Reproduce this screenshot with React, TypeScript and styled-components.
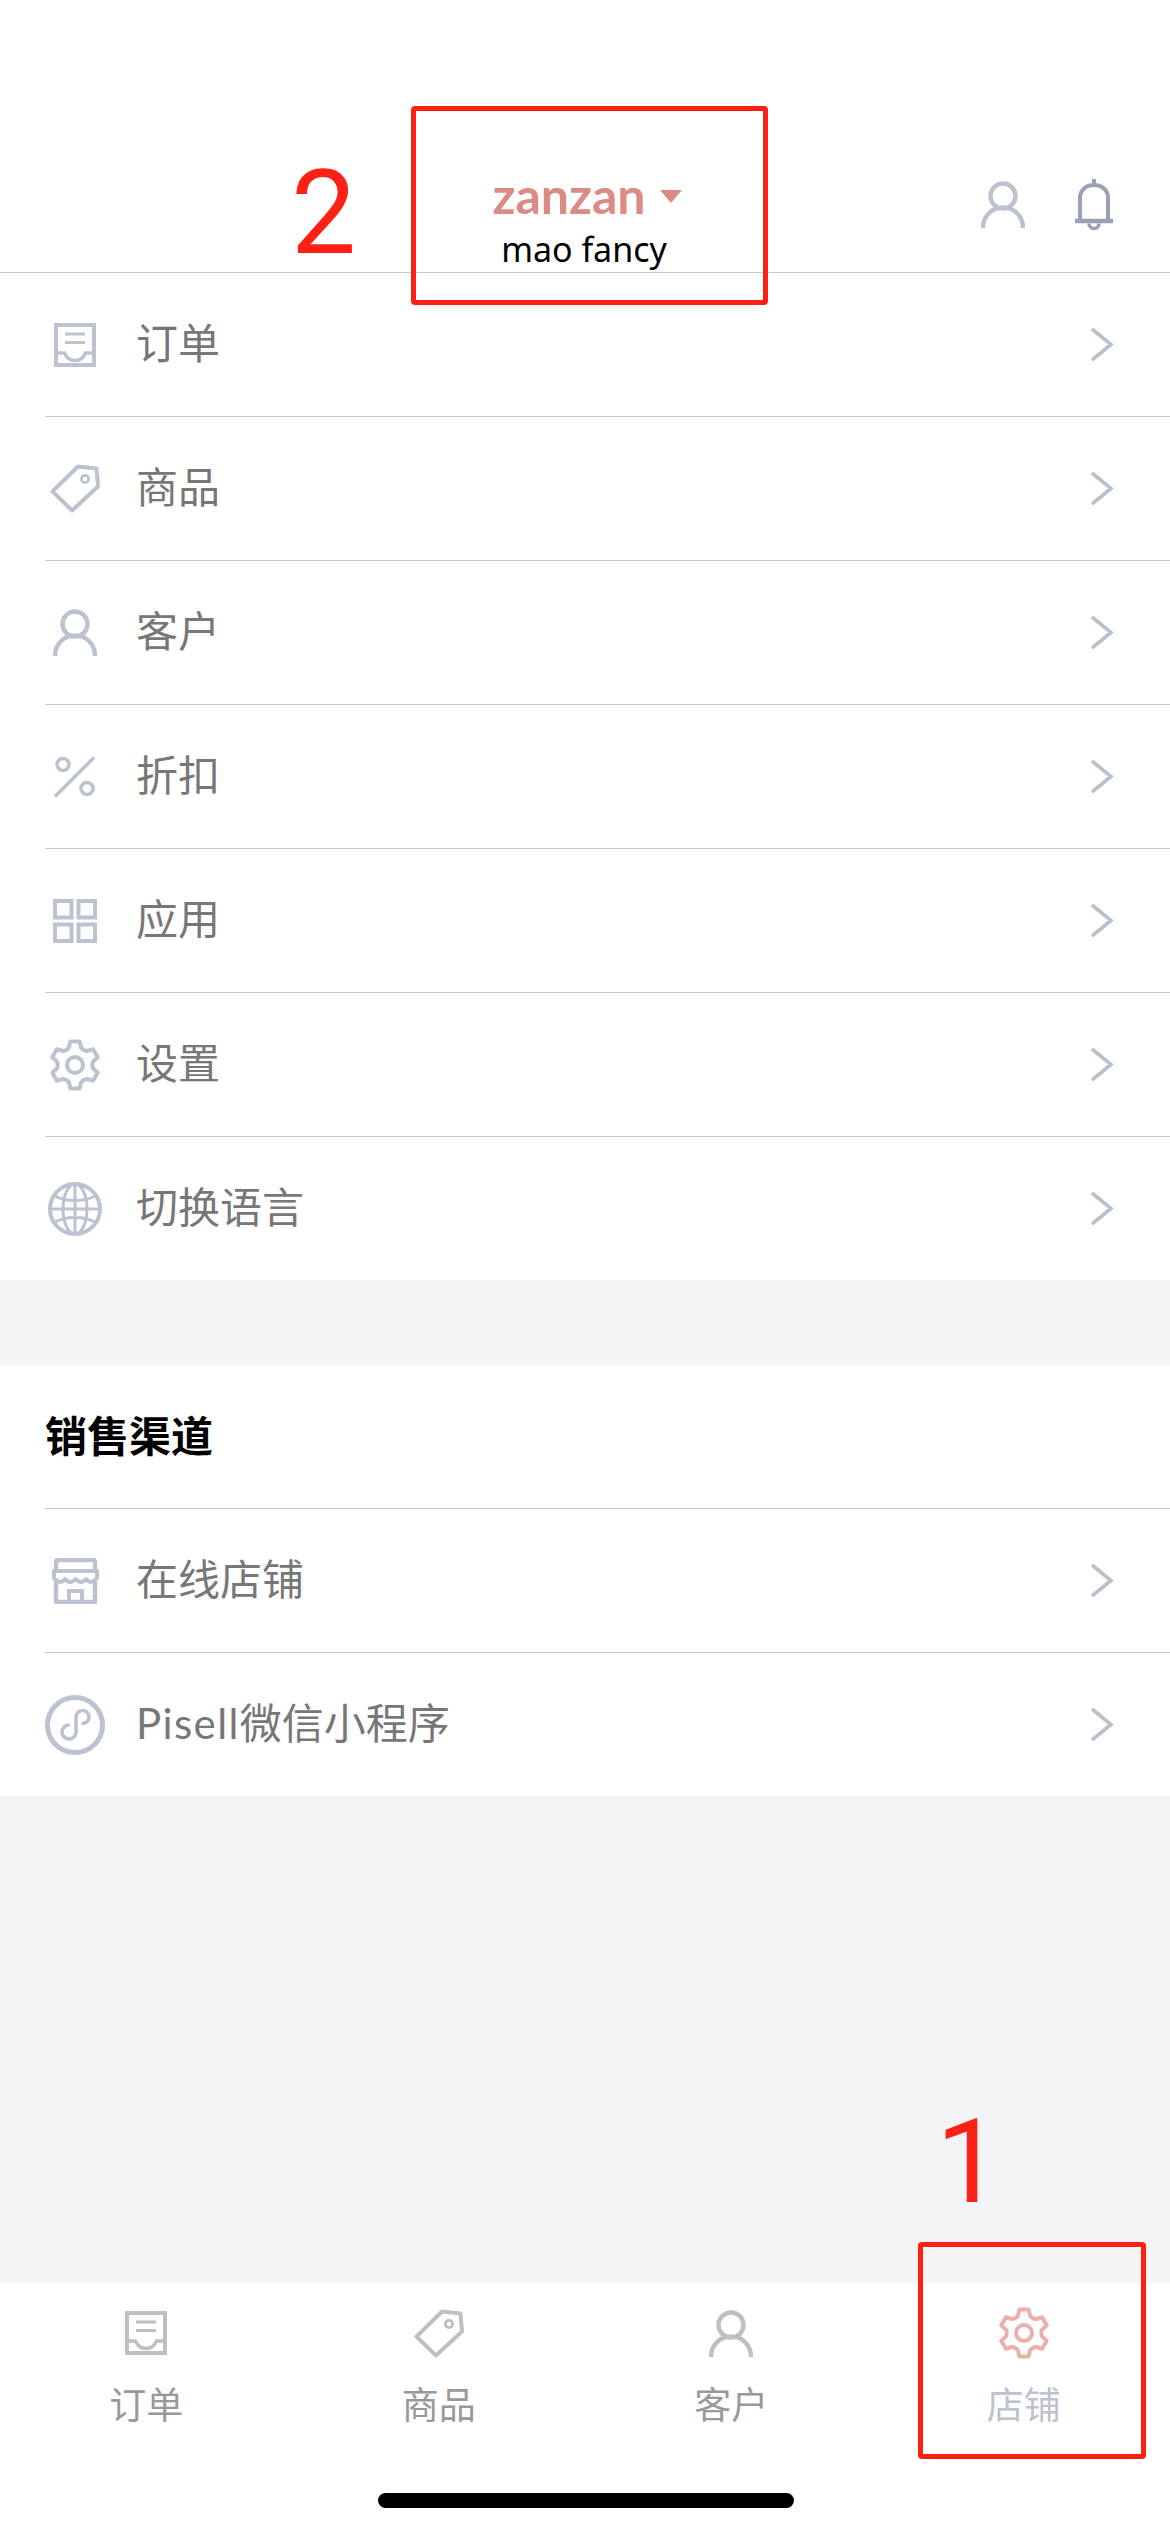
import { ReactNode } from 'react';
import styled, { createGlobalStyle } from 'styled-components';

const GlobalStyle = createGlobalStyle`
  html, body {
    margin: 0;
    padding: 0;
    background: #f3f4f6;
  }

  * {
    box-sizing: border-box;
  }
`;

const Page = styled.div`
  position: relative;
  display: flex;
  flex-direction: column;
  width: 1170px;
  height: 2532px;
  overflow: hidden;
  font-family: 'Lato', 'Noto Sans CJK SC', sans-serif;
  background: #f3f4f6;
`;

const Header = styled.header`
  display: grid;
  grid-template-columns: 1fr auto 1fr;
  align-items: start;
  height: 273px;
  padding: 170px 57px 0;
  background: #fff;
  border-bottom: 1px solid #c6c6c6;
`;

const StoreSwitch = styled.div`
  display: flex;
  grid-column: 2;
  flex-direction: column;
  align-items: center;
`;

const StoreName = styled.div`
  display: flex;
  gap: 14px;
  align-items: center;
  height: 50px;
  margin-left: 4px;
  color: #db8a84;
  font-weight: 700;
  font-size: 50px;
  line-height: 50px;
`;

const Caret = styled.span`
  width: 0;
  height: 0;
  margin-top: 2px;
  border-top: 13px solid #db8a84;
  border-right: 11px solid transparent;
  border-left: 11px solid transparent;
`;

const OwnerName = styled.div`
  margin-top: 7px;
  margin-right: 2px;
  color: #000;
  font-size: 34px;
  font-family: 'Noto Sans', sans-serif;
  line-height: 44px;
`;

const HeaderActions = styled.div`
  display: flex;
  grid-column: 3;
  gap: 50px;
  align-items: center;
  justify-content: flex-end;
  height: 62px;
  padding-top: 6px;
`;

const HeaderIcon = styled.span<{ $dark?: boolean }>`
  display: block;
  color: ${({ $dark }) => ($dark ? '#9aa1b5' : '#bcc2cf')};
`;

const MenuGroup = styled.section`
  background: #fff;
`;

const Gap = styled.div`
  height: 85px;
`;

const Filler = styled.div`
  flex: 1;
`;

const GroupTitle = styled.h2`
  display: flex;
  align-items: center;
  height: 144px;
  margin: 0 0 0 45px;
  padding-bottom: 6px;
  color: #000;
  font-weight: 700;
  font-size: 42px;
  border-bottom: 1px solid #c6c6c6;
`;

const Row = styled.div`
  display: flex;
  gap: 31px;
  align-items: center;
  height: 144px;
  margin-left: 45px;
  padding-right: 56px;
  color: #777;
  font-size: 42px;
  border-bottom: 1px solid #c6c6c6;

  &:last-child {
    height: 143px;
    border-bottom: none;
  }
`;

const RowIcon = styled.span`
  display: flex;
  flex: none;
  align-items: center;
  justify-content: center;
  width: 60px;
  height: 60px;
  color: #bcc2cf;
`;

const RowLabel = styled.span`
  flex: 1;
  margin-top: -8px;
`;

const BrandName = styled.span`
  letter-spacing: 1.4px;
`;

const TabBar = styled.nav`
  display: grid;
  grid-template-columns: repeat(4, 1fr);
  height: 249px;
  background: #fff;
`;

const Tab = styled.div<{ $active?: boolean }>`
  display: flex;
  flex-direction: column;
  align-items: center;
  padding-top: 20px;
  color: ${({ $active }) => ($active ? '#bcc2cf' : '#999')};
  font-size: 37px;
`;

const TabIcon = styled.span<{ $active?: boolean }>`
  display: flex;
  align-items: center;
  justify-content: center;
  height: 60px;
  color: ${({ $active }) => ($active ? '#e8b2ac' : '#bfbfbf')};
`;

const TabLabel = styled.span`
  margin-top: 19px;
  line-height: 46px;
`;

const HomeBar = styled.div`
  position: absolute;
  bottom: 24px;
  left: 378px;
  width: 416px;
  height: 15px;
  background: #000;
  border-radius: 8px;
`;

// red markup drawn over the screenshot
const Callout = styled.div<{ $left: number; $top: number; $width: number; $height: number }>`
  position: absolute;
  top: ${({ $top }) => $top}px;
  left: ${({ $left }) => $left}px;
  width: ${({ $width }) => $width}px;
  height: ${({ $height }) => $height}px;
  border: 5px solid #ff2015;
  border-radius: 4px;
`;

const CalloutNumber = styled.div<{ $left: number; $top: number }>`
  position: absolute;
  top: ${({ $top }) => $top}px;
  left: ${({ $left }) => $left}px;
  color: #ff2015;
  font-size: 116px;
  font-family: 'Roboto', sans-serif;
  line-height: 116px;
`;

const Svg = ({ w, h, children }: { w: number; h: number; children: ReactNode }) => (
  <svg
    width={w}
    height={h}
    viewBox={`0 0 ${w} ${h}`}
    fill="none"
    stroke="currentColor"
    strokeWidth={4}
    style={{ display: 'block' }}
  >
    {children}
  </svg>
);

const OrderIcon = () => (
  <Svg w={42} h={44}>
    <rect x="2" y="2" width="38" height="40" />
    <path d="M11 11H31M11 19.5H31" strokeWidth={3} />
    <path d="M2 30H10.5C12.5 35 16.5 37.5 21 37.5C25.5 37.5 29.5 35 31.5 30H40" strokeWidth={3.4} />
  </Svg>
);

const TagIcon = () => (
  <Svg w={50} h={49}>
    <path d="M28 2.5L46.5 4.5L48 22.5L22 46.5L2.5 27.5Z" strokeLinejoin="round" />
    <circle cx="35" cy="15" r="3.6" strokeWidth={2.8} />
  </Svg>
);

const PersonIcon = () => (
  <Svg w={44} h={47}>
    <circle cx="22" cy="15" r="12.5" strokeWidth={4.4} />
    <path d="M2 47C2 35 11 26.5 22 26.5C33 26.5 42 35 42 47" strokeWidth={4.4} />
  </Svg>
);

const PercentIcon = () => (
  <Svg w={42} h={41}>
    <circle cx="9" cy="8.5" r="6" strokeWidth={3.6} />
    <circle cx="33" cy="32.5" r="6" strokeWidth={3.6} />
    <path d="M39 2.5L2 39.5" strokeWidth={3.6} strokeLinecap="round" />
  </Svg>
);

const GridIcon = () => (
  <Svg w={44} h={44}>
    <rect x="2" y="2" width="16.5" height="16.5" />
    <rect x="25.5" y="2" width="16.5" height="16.5" />
    <rect x="2" y="25.5" width="16.5" height="16.5" />
    <rect x="25.5" y="25.5" width="16.5" height="16.5" />
  </Svg>
);

const polar = (r: number, deg: number) => {
  const a = ((deg - 90) * Math.PI) / 180;
  return `${(26 + r * Math.cos(a)).toFixed(2)} ${(26 + r * Math.sin(a)).toFixed(2)}`;
};

// six tooth gear, valleys pulled in with a curve
const gearPath = () => {
  let d = '';
  for (let i = 0; i < 6; i += 1) {
    const c = i * 60;
    d += `${i === 0 ? 'M' : 'L'}${polar(18.5, c - 19)}L${polar(24, c - 11)}L${polar(24, c + 11)}L${polar(18.5, c + 19)}`;
    d += `Q${polar(16.5, c + 30)} ${polar(18.5, c + 41)}`;
  }
  return `${d}Z`;
};

const GearIcon = () => (
  <Svg w={52} h={52}>
    <path d={gearPath()} strokeLinejoin="round" />
    <circle cx="26" cy="26" r="8" />
  </Svg>
);

const GlobeIcon = () => (
  <Svg w={54} h={54}>
    <circle cx="27" cy="27" r="25" strokeWidth={4} />
    <ellipse cx="27" cy="27" rx="12" ry="25" strokeWidth={3} />
    <path d="M27 2V52M2 27H52M7 14C18 20 36 20 47 14M7 40C18 34 36 34 47 40" strokeWidth={3} />
  </Svg>
);

const StoreIcon = () => (
  <Svg w={47} h={46}>
    <path d="M4 13V4.5C4 3 5 2 6.5 2H40.5C42 2 43 3 43 4.5V13" strokeWidth={4.4} />
    <path d="M2 13H45V20C41 25 37 25 34 21C31 25 27 25 23.5 21C20 25 16 25 13 21C10 25 6 25 2 20Z" strokeLinejoin="round" />
    <path d="M4 24V44H43V24" strokeLinejoin="round" strokeWidth={4.4} />
    <path d="M17 44V33H30V44" />
  </Svg>
);

const MiniProgramIcon = () => (
  <Svg w={60} h={60}>
    <circle cx="30" cy="30" r="27.5" strokeWidth={5} />
    <path d="M38 28.5A6.5 6.5 0 1 0 31 22V37A7 7 0 1 1 23.5 30" strokeWidth={3.6} strokeLinecap="round" />
  </Svg>
);

const BellIcon = () => (
  <Svg w={38} h={51}>
    <path d="M19 0V6M5 41V19C5 11 11 6 19 6C27 6 33 11 33 19V41" />
    <path d="M1 42H37" strokeWidth={4.4} strokeLinecap="round" />
    <path d="M14 44.5A5 5 0 0 0 24 44.5" strokeWidth={3.6} />
  </Svg>
);

const Chevron = () => (
  <svg width={25} height={35} viewBox="0 0 25 35" fill="none" stroke="#b9bfcc" strokeWidth={3.6}>
    <path d="M3 2L22 17.5L3 33" />
  </svg>
);

const mainItems = [
  { key: 'orders', label: '订单', icon: <OrderIcon /> },
  { key: 'products', label: '商品', icon: <TagIcon /> },
  { key: 'customers', label: '客户', icon: <PersonIcon /> },
  { key: 'discounts', label: '折扣', icon: <PercentIcon /> },
  { key: 'apps', label: '应用', icon: <GridIcon /> },
  { key: 'settings', label: '设置', icon: <GearIcon /> },
  { key: 'language', label: '切换语言', icon: <GlobeIcon /> },
];

const channelItems = [
  { key: 'store', label: '在线店铺', icon: <StoreIcon /> },
  {
    key: 'miniprogram',
    label: (
      <>
        <BrandName>Pisell</BrandName>微信小程序
      </>
    ),
    icon: <MiniProgramIcon />,
  },
];

const tabs = [
  { label: '订单', icon: <OrderIcon /> },
  { label: '商品', icon: <TagIcon /> },
  { label: '客户', icon: <PersonIcon /> },
  { label: '店铺', icon: <GearIcon />, active: true },
];

const MenuRow = ({ label, icon }: { label: ReactNode; icon: ReactNode }) => (
  <Row>
    <RowIcon>{icon}</RowIcon>
    <RowLabel>{label}</RowLabel>
    <Chevron />
  </Row>
);

const App = () => (
  <Page>
    <GlobalStyle />
    <Header>
      <StoreSwitch>
        <StoreName>
          zanzan
          <Caret />
        </StoreName>
        <OwnerName>mao fancy</OwnerName>
      </StoreSwitch>
      <HeaderActions>
        <HeaderIcon>
          <PersonIcon />
        </HeaderIcon>
        <HeaderIcon $dark>
          <BellIcon />
        </HeaderIcon>
      </HeaderActions>
    </Header>
    <MenuGroup>
      {mainItems.map((item) => (
        <MenuRow key={item.key} label={item.label} icon={item.icon} />
      ))}
    </MenuGroup>
    <Gap />
    <MenuGroup>
      <GroupTitle>销售渠道</GroupTitle>
      {channelItems.map((item) => (
        <MenuRow key={item.key} label={item.label} icon={item.icon} />
      ))}
    </MenuGroup>
    <Filler />
    <TabBar>
      {tabs.map((tab) => (
        <Tab key={tab.label} $active={tab.active}>
          <TabIcon $active={tab.active}>{tab.icon}</TabIcon>
          <TabLabel>{tab.label}</TabLabel>
        </Tab>
      ))}
    </TabBar>
    <HomeBar />
    <Callout $left={411} $top={106} $width={357} $height={199} />
    <CalloutNumber $left={291} $top={155}>2</CalloutNumber>
    <Callout $left={918} $top={2242} $width={228} $height={217} />
    <CalloutNumber $left={936} $top={2104}>1</CalloutNumber>
  </Page>
);

export default App;
